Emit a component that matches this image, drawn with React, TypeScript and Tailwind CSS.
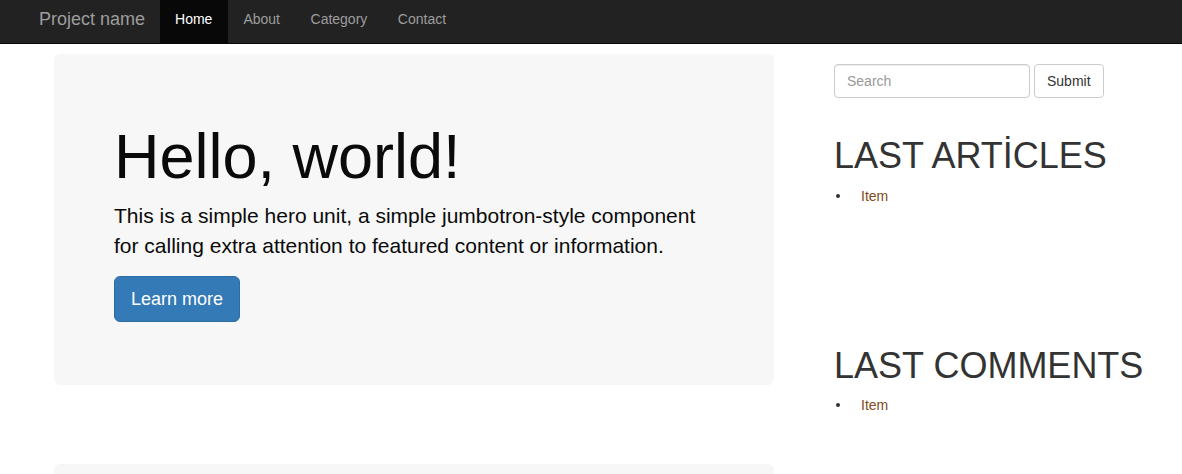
import React from 'react';

const navLinks = ['Home', 'About', 'Category', 'Contact'];

// Sidebar list block with a custom bullet
function SideList({ title, className }: { title: string; className?: string }) {
  return (
    <div className={className}>
      <h1 className="text-[36px] leading-[1.1] font-normal text-[#333]">{title}</h1>
      <ul className="mt-[10px]">
        <li className="flex items-center text-[14px] leading-[20px] text-[#7f4a1c]">
          <span className="ml-[2px] mr-[21px] inline-block w-[4px] h-[4px] rounded-full bg-[#333]" />
          Item
        </li>
      </ul>
    </div>
  );
}

export default function App() {
  return (
    <div className="min-h-[474px] bg-white font-['Liberation_Sans',Arial,sans-serif] overflow-hidden">
      <nav className="h-[44px] bg-[#222] border-b border-[#080808] flex pl-[24px]">
        <a className="px-[15px] pt-[7px] text-[18px] leading-[24px] text-[#9d9d9d]">Project name</a>
        <ul className="flex">
          {navLinks.map((link, i) => (
            <li key={link}>
              <a
                className={
                  i === 0
                    ? 'block h-[43px] pl-[15px] pr-[16px] pt-[9px] text-[14px] leading-[20px] bg-[#080808] text-white'
                    : 'block h-[43px] pl-[15px] pr-[15.5px] pt-[9px] text-[14px] leading-[20px] text-[#9d9d9d]'
                }
              >
                {link}
              </a>
            </li>
          ))}
        </ul>
      </nav>

      <div className="flex pl-[54px]">
        <div className="w-[720px] shrink-0">
          <div className="mt-[10px] bg-[#f7f7f7] rounded-[6px] px-[60px] pt-[48px] pb-[49px] text-[#0a0a0a]">
            <h1 className="mt-[20px] text-[63px] leading-[1.1] font-normal">Hello, world!</h1>
            <p className="mt-[10px] text-[21px] leading-[30px] font-light">
              This is a simple hero unit, a simple jumbotron-style component
              <br />
              for calling extra attention to featured content or information.
            </p>
            <div className="mt-[15px] mb-[14px]">
              <a className="inline-block bg-[#337ab7] border border-[#2e6da4] rounded-[6px] px-[16px] py-[10px] text-[18px] leading-[24px] text-white">
                Learn more
              </a>
            </div>
          </div>
          <div className="mt-[79px] h-[40px] bg-[#f7f7f7] rounded-[6px]" />
        </div>

        <div className="ml-[60px] w-[320px] shrink-0">
          <form className="mt-[20px] flex gap-[4px]">
            <input
              type="text"
              placeholder="Search"
              className="w-[196px] h-[34px] px-[12px] text-[14px] border border-[#ccc] rounded-[4px] placeholder:text-[#999] shadow-[inset_0_1px_1px_rgba(0,0,0,0.075)] outline-none"
            />
            <button
              type="button"
              className="h-[34px] px-[12px] text-[14px] text-[#333] bg-white border border-[#ccc] rounded-[4px]"
            >
              Submit
            </button>
          </form>
          <SideList title="LAST ARTİCLES" className="mt-[38px]" />
          <SideList title="LAST COMMENTS" className="mt-[140px]" />
        </div>
      </div>
    </div>
  );
}
